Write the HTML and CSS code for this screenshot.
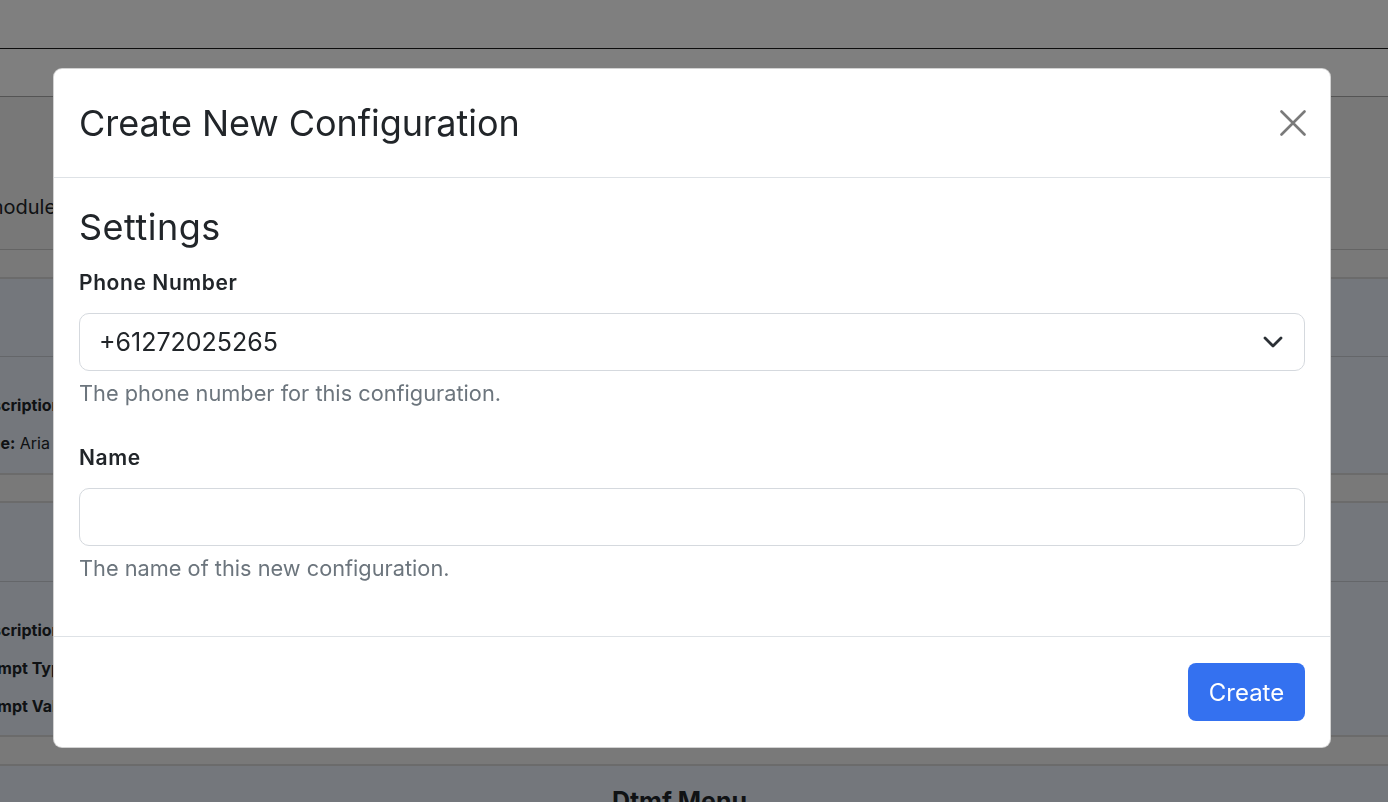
FILE: index.html
```html
<!DOCTYPE html>
<html lang="en">
<head>
<meta charset="utf-8">
<title>Create New Configuration</title>
<link rel="stylesheet" href="styles.css">
</head>
<body>
<div class="page">
  <div class="nav"></div>
  <div class="subnav"></div>
  <div class="intro"><span class="intro-text">module</span></div>
  <div class="spacer first"></div>
  <section class="card">
    <div class="card-head"></div>
    <div class="card-body">
      <p class="row"><b>Description:</b> Something</p>
      <p class="row"><b>Type:</b> Aria voice</p>
    </div>
  </section>
  <div class="spacer"></div>
  <section class="card">
    <div class="card-head tall"></div>
    <div class="card-body tall">
      <p class="row"><b>Description:</b> Something</p>
      <p class="row"><b>Prompt Type:</b> Text</p>
      <p class="row"><b>Prompt Value:</b> Hello</p>
    </div>
  </section>
  <div class="spacer wide"></div>
  <section class="card last">
    <h2 class="card-title">Dtmf Menu</h2>
  </section>
</div>

<div class="backdrop"></div>

<div class="modal" role="dialog" aria-modal="true">
  <div class="modal-header">
    <h1 class="modal-title">Create New Configuration</h1>
    <button class="btn-close" type="button" aria-label="Close">
      <svg width="26" height="26" viewBox="0 0 26 26"><path d="M1.5 1.5 L24.5 24.5 M24.5 1.5 L1.5 24.5" stroke="#7a7a7a" stroke-width="2.6" stroke-linecap="round" fill="none"/></svg>
    </button>
  </div>
  <div class="modal-body">
    <h2 class="section-title">Settings</h2>
    <div class="group">
      <label class="form-label">Phone Number</label>
      <div class="select">
        <span>+61272025265</span>
        <svg class="chev" width="20" height="12" viewBox="0 0 20 12"><path d="M2 2 L10 10 L18 2" stroke="#2b3035" stroke-width="2.8" stroke-linecap="round" stroke-linejoin="round" fill="none"/></svg>
      </div>
      <div class="form-text">The phone number for this configuration.</div>
    </div>
    <div class="group">
      <label class="form-label">Name</label>
      <div class="input"></div>
      <div class="form-text">The name of this new configuration.</div>
    </div>
  </div>
  <div class="modal-footer">
    <button class="btn-primary" type="button">Create</button>
  </div>
</div>
</body>
</html>
```

FILE: styles.css
```css
* { box-sizing: border-box; }
html, body { margin: 0; padding: 0; }
body {
  font-family: Inter, "Noto Sans", "Liberation Sans", sans-serif;
  color: #212529;
  background: #fff;
  overflow: hidden;
  height: 802px;
}

/* background page */
.page {
  display: flex;
  flex-direction: column;
  margin-left: -29px;
  width: calc(100% + 29px);
}
.nav { height: 49px; background: #fff; border-bottom: 1px solid #1a1a1a; }
.subnav { height: 48px; background: #fff; border-bottom: 1px solid #a8a8a8; }
.intro {
  height: 153px;
  background: #f0f0f0;
  border-bottom: 1px solid #c8c8c8;
  display: flex;
  align-items: flex-end;
  padding: 0 0 30px 15px;
}
.intro-text { font-size: 20px; line-height: 24px; color: #212529; }
.spacer {
  height: 30px;
  background: #f3f3f3;
  border-top: 2px solid #d6d6d6;
  border-bottom: 2px solid #d6d6d6;
}
.spacer.first { height: 29px; border-top: 0; }
.spacer.wide { height: 31px; }
.card { background: #e8eff8; }
.card-head { height: 78px; border-bottom: 1px solid #c9cdd2; }
.card-head.tall { height: 79px; }
.card-body { height: 116px; padding-top: 37px; }
.card-body.tall { height: 153px; padding-top: 37px; }
.row { margin: 0 0 15px; font-size: 16px; line-height: 23px; }
.row b { font-weight: 700; }
.card.last { height: 60px; }
.card-title {
  margin: 0;
  padding-top: 20px;
  text-align: center;
  font-size: 25px;
  font-weight: 700;
  line-height: 30px;
}

/* backdrop & modal */
.backdrop {
  position: fixed;
  inset: 0;
  background: rgba(0, 0, 0, 0.5);
}
.modal {
  position: fixed;
  top: 68px;
  left: 53px;
  width: 1278px;
  height: 680px;
  background: #fff;
  border: 1px solid rgba(0, 0, 0, 0.175);
  border-radius: 9px;
  display: flex;
  flex-direction: column;
}
.modal-header {
  height: 109px;
  border-bottom: 1px solid #dee2e6;
  display: flex;
  align-items: center;
  justify-content: space-between;
  padding: 0 24px 0 25px;
}
.modal-title {
  margin: 0;
  font-size: 36px;
  font-weight: 400;
  line-height: 43px;
  letter-spacing: -0.06px;
}
.btn-close {
  border: 0;
  background: transparent;
  padding: 0;
  width: 26px;
  height: 26px;
  display: flex;
}
.modal-body {
  flex: 1;
  padding: 29px 25px 0 25px;
}
.section-title {
  margin: 0 0 20px;
  font-size: 36px;
  font-weight: 400;
  line-height: 41px;
  letter-spacing: 0.5px;
}
.group { margin-bottom: 35px; }
.form-label {
  display: block;
  font-size: 21px;
  font-weight: 600;
  line-height: 30px;
  margin-bottom: 15px;
  letter-spacing: 0.6px;
}
.select, .input {
  height: 58px;
  border: 1px solid #d5d9de;
  border-radius: 10px;
  background: #fff;
}
.select {
  display: flex;
  align-items: center;
  justify-content: space-between;
  padding: 0 21px 0 19px;
  font-size: 25px;
}
.form-text {
  margin-top: 7px;
  font-size: 21.75px;
  line-height: 30px;
  color: #6c757d;
}
.modal-footer {
  height: 111px;
  border-top: 1px solid #dee2e6;
  display: flex;
  align-items: center;
  justify-content: flex-end;
  padding: 0 25px;
}
.btn-primary {
  height: 58px;
  width: 117px;
  border: 0;
  border-radius: 8px;
  background: #3471f0;
  color: #fff;
  font-family: inherit;
  font-size: 24px;
}
```
